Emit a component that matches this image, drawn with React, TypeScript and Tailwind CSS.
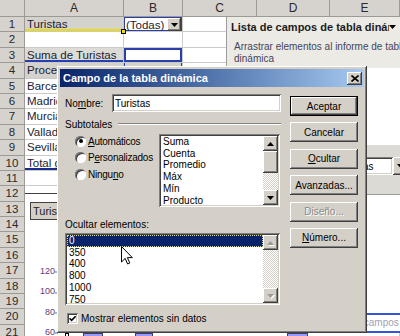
import type { ReactNode } from 'react'

const elevado = 'shadow-[inset_-1px_-1px_#404040,inset_1px_1px_#ffffff,inset_-2px_-2px_#808080,inset_2px_2px_#d4d0c8]'
const hundido = 'shadow-[inset_1px_1px_#808080,inset_-1px_-1px_#ffffff,inset_2px_2px_#404040,inset_-2px_-2px_#d4d0c8]'
const tramado = 'bg-[repeating-conic-gradient(#d4d0c8_0%_25%,#ffffff_0%_50%)] bg-[length:2px_2px]'

const celda = 'border-r border-b border-[#cacaca] overflow-hidden whitespace-nowrap pl-[2px] text-[11.5px] leading-[14px] text-[#221c33]'
const encabezado = 'bg-[#d6d3ce] border-r border-b border-[#9c9a94] text-center text-[#2a2a2a]'

// columna A de la tabla dinámica
const colA: Record<number, [string, string]> = {
  1: ['Turistas', 'bg-[#d4d2cc] shadow-[inset_0_-2px_#e8dc10]'],
  3: ['Suma de Turistas', 'bg-[#dddbd6] shadow-[inset_0_-2px_#2740b0]'],
  4: ['Procedencia', 'bg-[#d4d2cc]'],
  5: ['Barcelona', ''],
  6: ['Madrid', ''],
  7: ['Murcia', ''],
  8: ['Valladolid', ''],
  9: ['Sevilla', ''],
  10: ['Total general', 'shadow-[inset_0_-2px_#1c2c8c]'],
}

function Flecha({ arriba, gris }: { arriba?: boolean; gris?: boolean }) {
  return (
    <svg width="7" height="4" viewBox="0 0 7 4" className={gris ? 'drop-shadow-[1px_1px_0_#ffffff]' : ''}>
      <path d={arriba ? 'M3.5 0L7 4H0Z' : 'M0 0H7L3.5 4Z'} fill={gris ? '#9a9a9a' : '#000000'} />
    </svg>
  )
}

function BotonBarra({ arriba, gris }: { arriba?: boolean; gris?: boolean }) {
  return (
    <div className={`h-[15px] flex items-center justify-center bg-[#d4d0c8] ${elevado}`}>
      <Flecha arriba={arriba} gris={gris} />
    </div>
  )
}

function Hoja() {
  const filas = Array.from({ length: 21 }, (_, i) => i + 1)
  return (
    <div className="grid grid-cols-[25px_99px_59px_74px_73px_70px] grid-rows-[17px] auto-rows-[15.4px]">
      <div className={encabezado} />
      {['A', 'B', 'C', 'D', 'E'].map((c) => (
        <div key={c} className={`${encabezado} text-[12px] leading-[16px]`}>{c}</div>
      ))}
      {filas.map((r) => {
        const a = colA[r]
        return (
          <div key={r} className="contents">
            <div className={`${encabezado} text-[11.5px] leading-[15px]`}>{r}</div>
            <div className={`${celda} ${a ? a[1] : ''} ${r === 1 ? 'relative overflow-visible' : ''}`}>
              {a ? a[0] : ''}
              {r === 1 && <span className="absolute -right-[3px] -bottom-[3px] w-[5px] h-[5px] bg-[#f0e000] border border-black" />}
            </div>
            {r === 1 ? (
              <div className={`${celda} flex bg-white shadow-[inset_0_0_0_1px_#2b3fa8] pr-[1px] pt-[1px]`}>
                <span className="flex-1">(Todas)</span>
                <span className={`w-[14px] h-[13px] flex items-center justify-center bg-[#d4d0c8] ${elevado}`}>
                  <Flecha />
                </span>
              </div>
            ) : r === 3 ? (
              <div className={`${celda} shadow-[inset_0_0_0_2px_#2b3fa8]`} />
            ) : r === 4 ? (
              <div className={`${celda} bg-[#d4d2cc] shadow-[inset_1px_0_#2b3fa8,inset_-1px_0_#2b3fa8]`}>Total</div>
            ) : (
              <div className={celda} />
            )}
            <div className={celda} />
            <div className={celda} />
            <div className={celda} />
          </div>
        )
      })}
    </div>
  )
}

function Grafico() {
  return (
    <div className="absolute left-[25px] top-[193px] w-[345px] h-[150px] bg-white border-t border-[#404040] flex flex-col">
      <svg className="absolute inset-0" width="345" height="150">
        {[78, 99, 119, 139].map((y) => (
          <line key={y} x1="30" x2="33" y1={y} y2={y} stroke="#707070" />
        ))}
        <rect x="40.5" y="139.5" width="3" height="12" fill="#ffffff" stroke="#000000" />
        <rect x="58.5" y="139.5" width="19" height="12" fill="#9999ff" stroke="#404060" />
        <rect x="110.5" y="139.5" width="17" height="12" fill="#9999ff" stroke="#404060" />
        <rect x="262.5" y="139.5" width="20" height="12" fill="#9999ff" stroke="#404060" />
      </svg>
      <div className="relative mt-[8px] ml-[5px] w-[60px] h-[18px] bg-[#d4d0c8] border border-[#404040] pl-[2px] text-[11px] leading-[16px] text-[#222]">
        Turistas
      </div>
      <div className="relative mt-[40.8px] w-[30px] text-right text-[9px] text-[#5b3d7a]">
        {['120', '100', '80', '60'].map((v) => (
          <div key={v} className="h-[20.4px] leading-[20.4px]">{v}</div>
        ))}
      </div>
    </div>
  )
}

function ListaCampos() {
  return (
    <div className="absolute left-[226px] top-[17px] w-[190px] h-[316px] bg-[#ebeae5] border-l border-[#9c9c9c] flex flex-col">
      <div className="h-[20px] flex items-center pl-[4px]">
        <span className="w-[158px] overflow-hidden whitespace-nowrap font-bold text-[11px] text-[#1c1c1c]">
          Lista de campos de tabla dinámica
        </span>
        <Flecha />
      </div>
      <p className="h-[31px] pl-[7px] pt-[4px] text-[10px] leading-[11.5px] text-[#45455a]">
        Arrastrar elementos al informe de tabla dinámica
      </p>
      <div className="h-[77px] bg-white" />
      <div className="h-[12px] bg-[#dcdad5]" />
      <div className="h-[18px] flex bg-[#dcdad5]">
        <div className={`ml-[4px] w-[78px] bg-[#d4d0c8] ${elevado} text-[10px] flex items-center justify-center`}>Agregar a</div>
        <div className={`ml-[6px] w-[78px] bg-white ${hundido} text-[10px] flex items-center pl-[3px]`}>Área de filas</div>
        <div className={`w-[15px] bg-[#d4d0c8] ${elevado} flex items-center justify-center`}>
          <Flecha />
        </div>
      </div>
      <div className="h-[20px] bg-[#dcdad5] border-b border-[#9a9a9a]" />
      <div className="flex-1 bg-white" />
      <div className="h-[20px] border-y-2 border-[#3355dd] bg-white text-[10px] leading-[16px] text-[#a0a0b8] pl-[99px] whitespace-nowrap">
        Lista de campos de tabla
      </div>
    </div>
  )
}

function Boton({ children, predeterminado, inactivo }: { children: ReactNode; predeterminado?: boolean; inactivo?: boolean }) {
  return (
    <div
      className={`w-[68px] h-[20px] flex items-center justify-center bg-[#d4d0c8] text-[10px] ${
        predeterminado ? 'border border-black shadow-[inset_-1px_-1px_#404040,inset_1px_1px_#ffffff,inset_-2px_-2px_#808080]' : elevado
      } ${inactivo ? 'text-[#8a8a8a] [text-shadow:1px_1px_0_#ffffff]' : 'text-black'}`}
    >
      {children}
    </div>
  )
}

function Radio({ marcado, children }: { marcado?: boolean; children: ReactNode }) {
  return (
    <div className="h-[16.5px] flex items-center gap-[2px]">
      <span className="w-[11px] h-[11px] shrink-0 rounded-full bg-white shadow-[inset_1px_1px_#808080,inset_-1px_-1px_#ffffff,inset_2px_2px_#404040] flex items-center justify-center">
        {marcado && <span className="w-[4px] h-[4px] rounded-full bg-black" />}
      </span>
      <span className="tracking-[-0.25px] whitespace-nowrap">{children}</span>
    </div>
  )
}

function Dialogo() {
  const subtotales = ['Suma', 'Cuenta', 'Promedio', 'Máx', 'Mín', 'Producto']
  const valores = ['350', '400', '800', '1000', '750']
  return (
    <div className={`absolute left-[57px] top-[66px] w-[310px] h-[267px] bg-[#d4d0c8] p-[3px] flex flex-col text-black ${elevado}`}>
      {/* barra de título */}
      <div className="h-[18px] flex items-center bg-linear-to-r from-[#0a246a] to-[#a6caf0] pl-[3px] pr-[2px]">
        <span className="flex-1 text-white font-bold text-[11px]">Campo de la tabla dinámica</span>
        <span className={`w-[15px] h-[13px] bg-[#d4d0c8] ${elevado} flex items-center justify-center`}>
          <svg width="8" height="7" viewBox="0 0 8 7">
            <path d="M0.5 0.5L7.5 6.5M7.5 0.5L0.5 6.5" stroke="#000" strokeWidth="1.6" />
          </svg>
        </span>
      </div>

      <div className="flex flex-1 text-[10px]">
        <div className="w-[221px] pl-[5px] flex flex-col">
          <div className="mt-[7px] h-[18px] flex items-center">
            <span className="w-[47px]">No<span className="underline">m</span>bre:</span>
            <div className={`flex-1 h-full bg-white ${hundido} flex items-center pl-[3px]`}>Turistas</div>
          </div>

          <div className="mt-[6px] h-[12px] flex items-center">
            <span>Subtotales</span>
            <span className="flex-1 ml-[6px] h-[2px] border-t border-[#808080] border-b border-b-white" />
          </div>

          <div className="mt-[4px] flex">
            <div className="w-[94px] pl-[10px] -mt-[1px]">
              <Radio marcado><span className="underline">A</span>utomáticos</Radio>
              <Radio>P<span className="underline">e</span>rsonalizados</Radio>
              <Radio>Ningu<span className="underline">n</span>o</Radio>
            </div>
            <div className={`w-[121px] h-[73px] bg-white p-[2px] flex ${hundido}`}>
              <div className="flex-1 pl-[2px] leading-[11.7px] overflow-hidden">
                {subtotales.map((s) => (
                  <div key={s}>{s}</div>
                ))}
              </div>
              <div className="w-[15px] flex flex-col">
                <BotonBarra arriba />
                <div className={`h-[22px] bg-[#d4d0c8] ${elevado}`} />
                <div className={`flex-1 ${tramado}`} />
                <BotonBarra />
              </div>
            </div>
          </div>

          <div className="mt-[12px] h-[12px] leading-[12px]">Ocultar elementos:</div>

          <div className={`mt-[2px] w-[215px] h-[72px] bg-white p-[2px] flex ${hundido}`}>
            <div className="flex-1 leading-[11.7px]">
              <div className="h-[11.7px] leading-[9.7px] bg-[#0a246a] text-white pl-[1px] border border-dotted border-[#d8d8a0]">0</div>
              {valores.map((v) => (
                <div key={v} className="pl-[2px]">{v}</div>
              ))}
            </div>
            <div className="w-[15px] flex flex-col">
              <BotonBarra arriba gris />
              <div className={`flex-1 ${tramado}`} />
              <BotonBarra gris />
            </div>
          </div>

          <div className="mt-[6px] h-[14px] flex items-center gap-[3px] pl-[2px]">
            <span className={`w-[11px] h-[11px] bg-white ${hundido} flex items-center justify-center`}>
              <svg width="7" height="7" viewBox="0 0 7 7">
                <path d="M0.5 3.2L2.6 5.4L6.6 1.2" stroke="#000" strokeWidth="1.6" fill="none" />
              </svg>
            </span>
            <span>Mostrar elementos sin datos</span>
          </div>
        </div>

        <div className="ml-[9px] mt-[9px] flex flex-col gap-[6.4px]">
          <Boton predeterminado>Aceptar</Boton>
          <Boton>Cancelar</Boton>
          <Boton><span><span className="underline">O</span>cultar</span></Boton>
          <Boton>Avanzadas...</Boton>
          <Boton inactivo>Diseño...</Boton>
          <Boton><span><span className="underline">N</span>úmero...</span></Boton>
        </div>
      </div>
    </div>
  )
}

function Cursor() {
  return (
    <svg className="absolute left-[121px] top-[246px]" width="12" height="19" viewBox="0 0 12 19">
      <path d="M0.5 0.5V16L4.2 12.4L6.6 18L8.8 17L6.4 11.6H11.3Z" fill="#ffffff" stroke="#000000" strokeWidth="1" strokeLinejoin="round" />
    </svg>
  )
}

export default function App() {
  return (
    <div className="relative w-[400px] h-[336px] overflow-hidden bg-white font-['Liberation_Sans',Arial,sans-serif]">
      <Hoja />
      <Grafico />
      <ListaCampos />
      <Dialogo />
      <Cursor />
    </div>
  )
}
